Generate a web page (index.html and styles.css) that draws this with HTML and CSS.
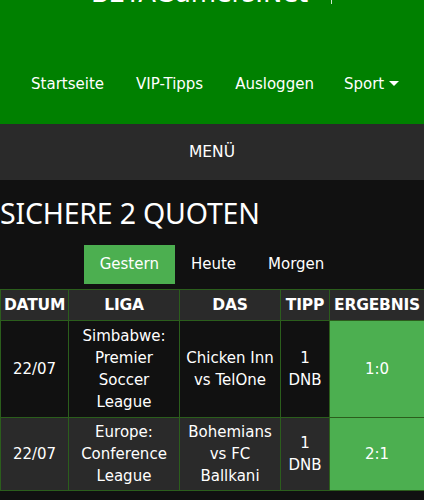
FILE: index.html
```html
<!doctype html>
<html lang="de">
<head>
  <meta charset="UTF-8">
  <title>Sichere 2 Quoten</title>
  <link rel="stylesheet" href="styles.css">
</head>
<body>
  <div id="header">
    <div class="logo"><a href="javascript:;">BETAGamers.Net</a><span class="bar"></span></div>
    <ul class="nav">
      <li><a href="javascript:;">Startseite</a></li>
      <li><a href="javascript:;">VIP-Tipps</a></li>
      <li><a href="javascript:;">Ausloggen</a></li>
      <li><a href="javascript:;">Sport <i class="caret"></i></a></li>
    </ul>
  </div>
  <div class="menu">MENÜ</div>
  <div class="content">
    <h1>SICHERE 2 QUOTEN</h1>
    <div class="tabs">
      <a href="javascript:;" class="on">Gestern</a>
      <a href="javascript:;">Heute</a>
      <a href="javascript:;">Morgen</a>
    </div>
    <table class="tips">
      <colgroup>
        <col class="c1"><col class="c2"><col class="c3"><col class="c4"><col class="c5">
      </colgroup>
      <tr>
        <th>DATUM</th><th>LIGA</th><th>DAS</th><th>TIPP</th><th>ERGEBNIS</th>
      </tr>
      <tr>
        <td>22/07</td>
        <td>Simbabwe: Premier Soccer League</td>
        <td>Chicken Inn vs TelOne</td>
        <td>1 DNB</td>
        <td class="win">1:0</td>
      </tr>
      <tr class="alt">
        <td>22/07</td>
        <td>Europe: Conference League</td>
        <td>Bohemians vs FC Ballkani</td>
        <td>1 DNB</td>
        <td class="win">2:1</td>
      </tr>
    </table>
  </div>
</body>
</html>
```

FILE: styles.css
```css
body,ul,li,h1{ margin:0; padding:0;}
ul,li{ list-style:none;}
body{ background:#111111; color:#ffffff; font-family:"DejaVu Sans", Verdana, sans-serif; font-size:15px; height:500px; overflow:hidden;}
a{ color:#ffffff; text-decoration:none;}

#header{ background:#008000; height:124px;}
#header .logo{ height:44px; position:relative; overflow:hidden;}
#header .logo a{ display:block; margin:-22px 0 0 91px; font-size:26px; line-height:30px; letter-spacing:-0.3px;}
#header .logo .bar{ position:absolute; left:331px; top:0; width:1px; height:4px; background:#cfe8cf;}
#header .nav{ display:flex; justify-content:center; height:80px; align-items:flex-start; padding-left:6px;}
#header .nav li a{ display:block; padding:30px 16px 0; line-height:20px; font-size:15px;}
#header .nav li:last-child a{ padding-left:14px;}
#header .caret{ display:inline-block; width:0; height:0; border-left:5px solid transparent; border-right:5px solid transparent; border-top:5px solid #fff; vertical-align:3px;}

.menu{ background:#2a2a2a; height:56px; line-height:56px; text-align:center; font-size:15.5px;}

.content h1{ font-family:"Noto Sans", sans-serif; font-weight:normal; font-size:28.5px; line-height:30px; padding:18px 0 17px; letter-spacing:-0.2px;}
.tabs{ display:flex; justify-content:center; height:44px;}
.tabs a{ display:block; height:39px; line-height:39px; padding:0 16px; font-size:15px;}
.tabs a.on{ background:#4caf50;}

.tips{ width:424px; border-collapse:collapse; table-layout:fixed; text-align:center;}
.tips .c1{ width:68px;}
.tips .c2{ width:111px;}
.tips .c3{ width:101px;}
.tips .c4{ width:49px;}
.tips .c5{ width:95px;}
.tips th,.tips td{ border:1px solid #2b5e1c; line-height:22px;}
.tips th{ background:#2a2a2a; font-weight:bold; font-size:15.5px; height:21px; padding:4px 0; white-space:nowrap; letter-spacing:-0.2px;}
.tips td{ padding:4px 5px; font-size:15px;}
.tips tr.alt td{ background:#2a2a2a; padding:3px 5px;}
.tips td.win,.tips tr.alt td.win{ background:#4caf50;}
```
